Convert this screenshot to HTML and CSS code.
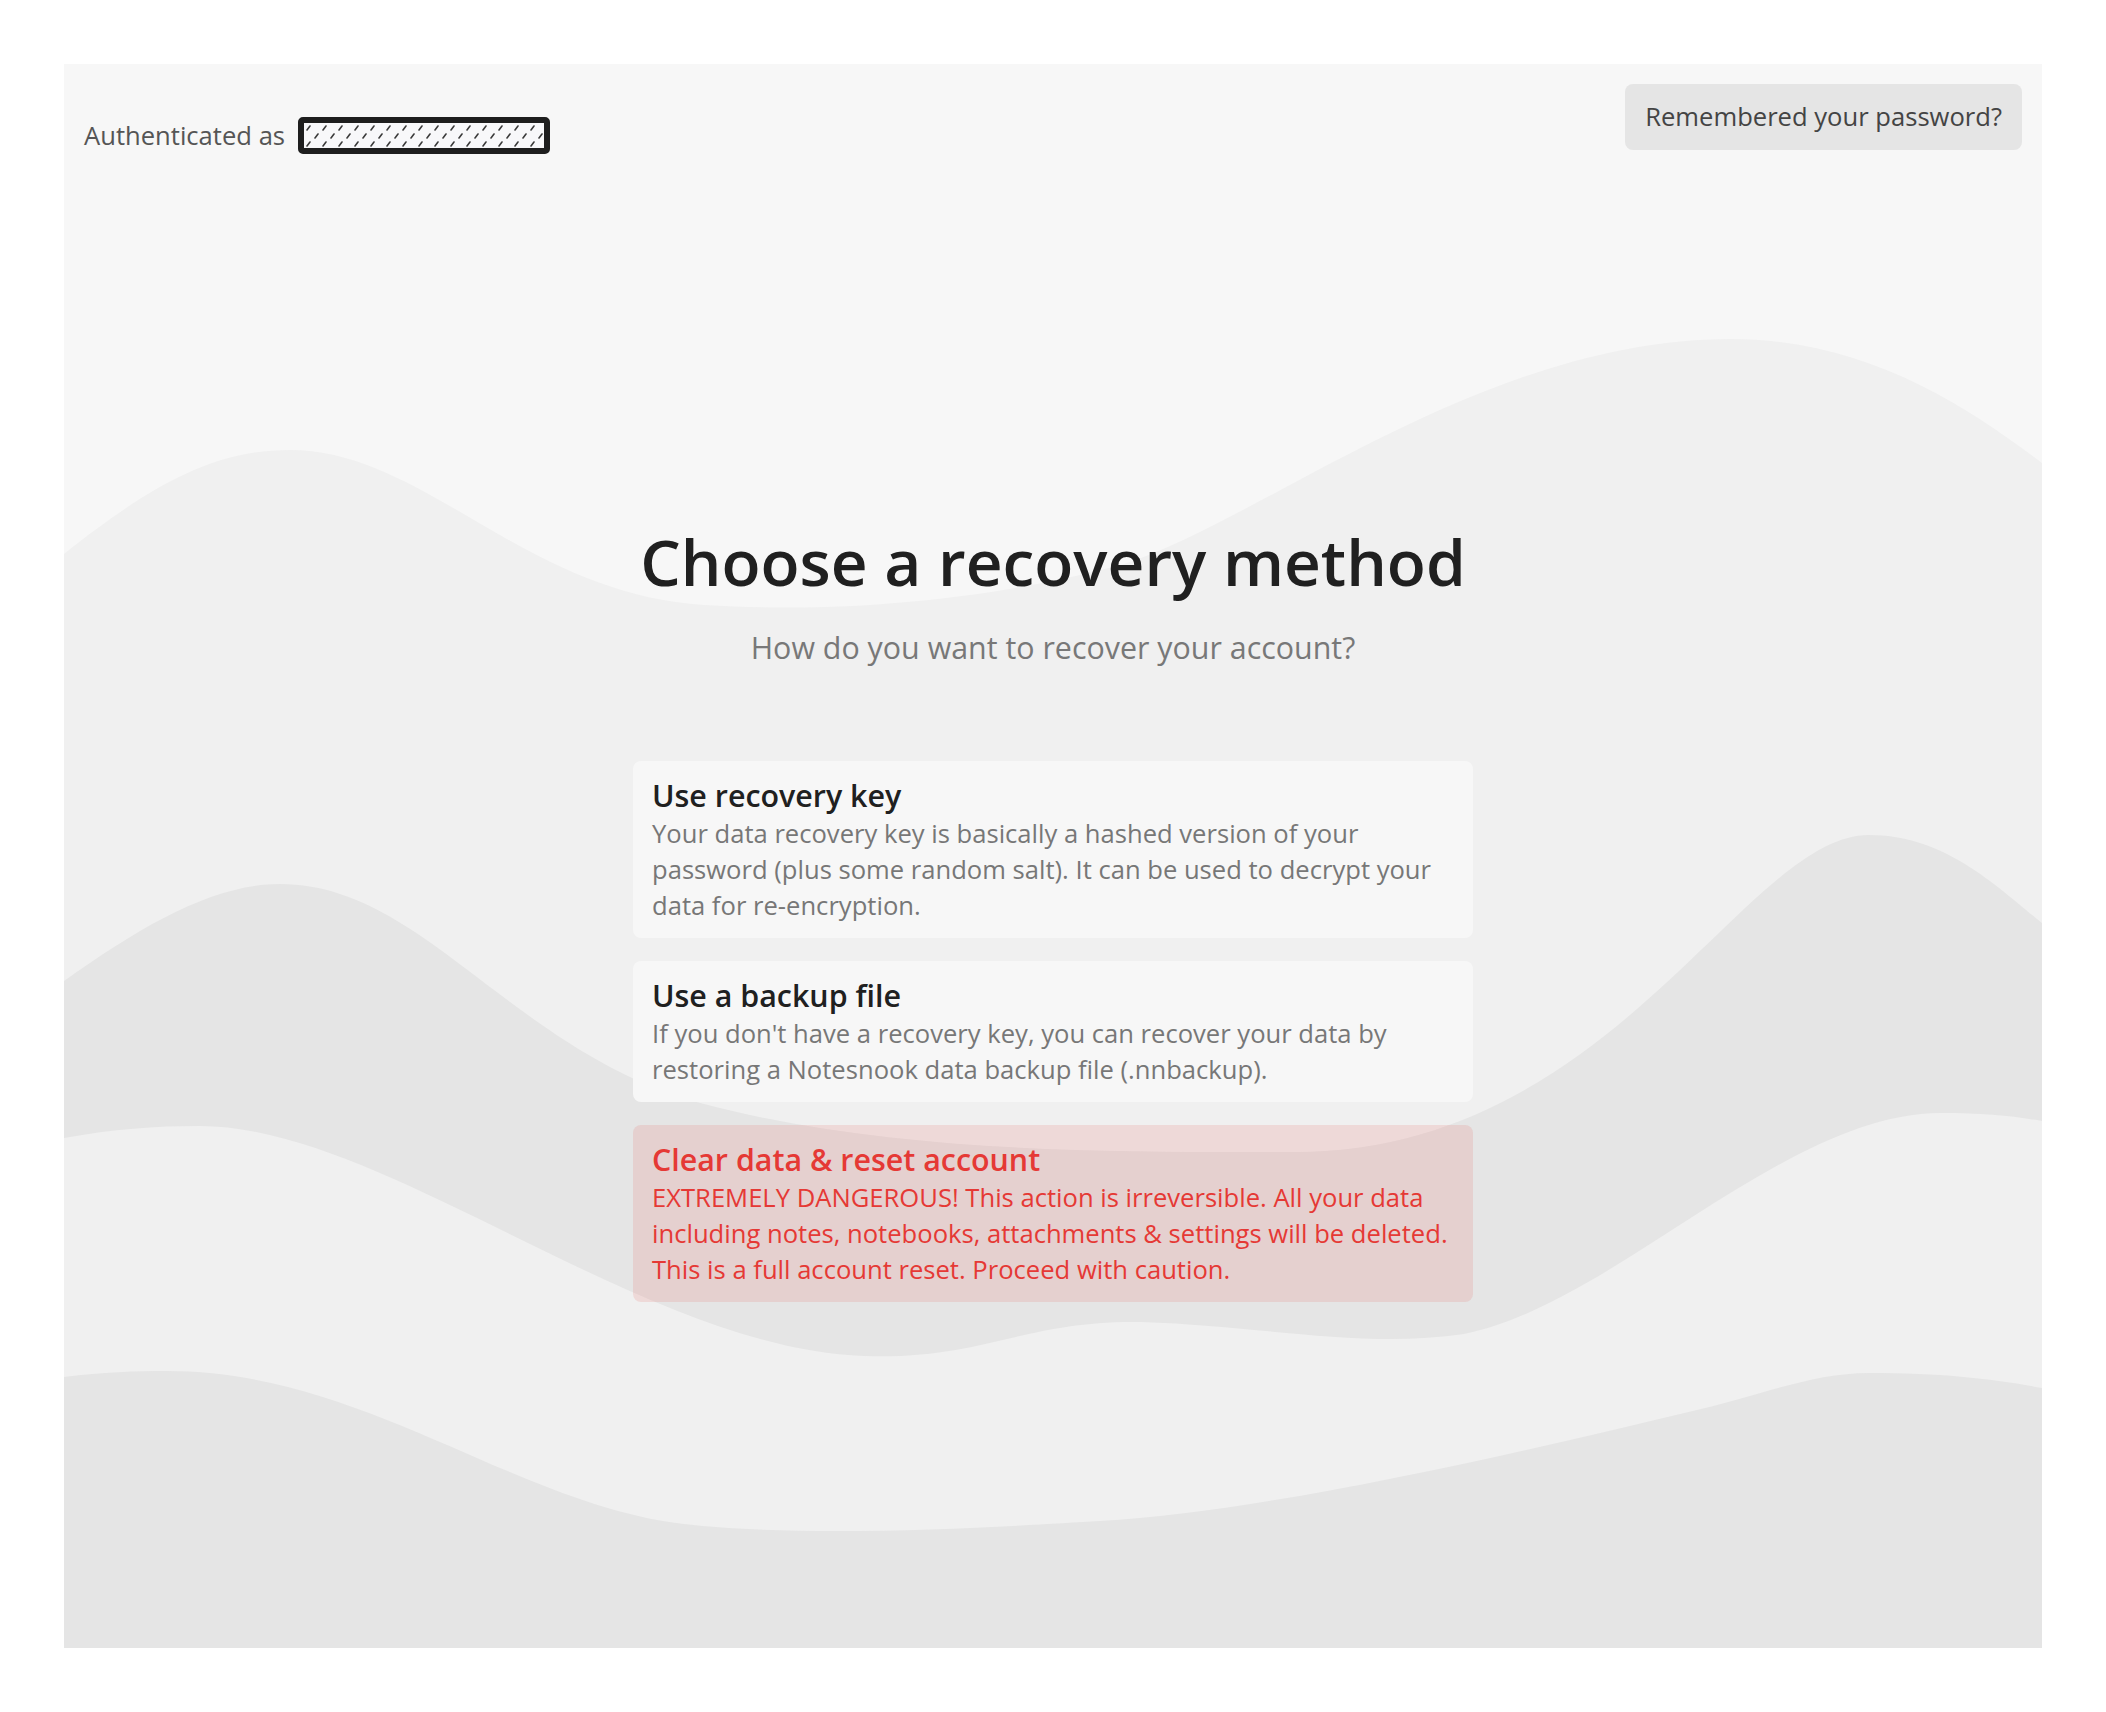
FILE: index.html
```html
<!DOCTYPE html>
<html lang="en">
<head>
<meta charset="utf-8">
<title>Choose a recovery method</title>
<link rel="stylesheet" href="styles.css">
</head>
<body>
<div class="frame">
  <svg class="waves" viewBox="0 0 1978 1584" preserveAspectRatio="none" aria-hidden="true">
    <path class="wave-light" d="M0,490 C100,410 160,386 226,386 C360,386 460,530 640,541 C800,551 950,530 1060,500 C1200,455 1420,275 1667,275 C1800,275 1900,340 1978,399 L1978,1584 L0,1584 Z"/>
    <path class="wave-dark" d="M0,917 C80,860 150,820 216,820 C360,820 450,990 640,1040 C830,1090 1050,1088 1230,1088 C1550,1088 1680,771 1805,771 C1880,771 1930,820 1978,859 L1978,1584 L0,1584 Z"/>
    <path class="wave-light" d="M0,1074 C50,1065 90,1062 136,1062 C320,1062 580,1285 800,1292 C920,1296 960,1256 1077,1258 C1200,1262 1300,1285 1400,1270 C1550,1240 1720,1049 1877,1049 C1920,1049 1950,1052 1978,1057 L1978,1584 L0,1584 Z"/>
    <path class="wave-dark" d="M0,1313 C40,1308 70,1307 103,1307 C300,1307 450,1440 620,1460 C750,1475 950,1462 1036,1457 C1200,1448 1450,1390 1637,1345 C1700,1330 1750,1309 1805,1309 C1880,1309 1930,1315 1978,1324 L1978,1584 L0,1584 Z"/>
  </svg>

  <header class="topbar">
    <div class="auth">
      <span class="auth-label">Authenticated as</span>
      <span class="redact">
        <svg class="redact-fill" width="100%" height="100%" aria-hidden="true">
          <defs>
            <pattern id="hatch" width="16" height="16" patternUnits="userSpaceOnUse">
              <line x1="3" y1="7" x2="6" y2="3"/>
              <line x1="11" y1="15" x2="14" y2="11"/>
            </pattern>
          </defs>
          <rect width="100%" height="100%" fill="url(#hatch)"/>
        </svg>
      </span>
    </div>
    <button class="btn-remember" type="button">Remembered your password?</button>
  </header>

  <main class="main">
    <h1 class="title">Choose a recovery method</h1>
    <p class="subtitle">How do you want to recover your account?</p>

    <div class="options">
      <div class="option">
        <div class="option-title">Use recovery key</div>
        <div class="option-desc">Your data recovery key is basically a hashed version of your password (plus some random salt). It can be used to decrypt your data for re-encryption.</div>
      </div>
      <div class="option">
        <div class="option-title">Use a backup file</div>
        <div class="option-desc">If you don't have a recovery key, you can recover your data by restoring a Notesnook data backup file (.nnbackup).</div>
      </div>
      <div class="option option-danger">
        <div class="option-title">Clear data &amp; reset account</div>
        <div class="option-desc">EXTREMELY DANGEROUS! This action is irreversible. All your data including notes, notebooks, attachments &amp; settings will be deleted. This is a full account reset. Proceed with caution.</div>
      </div>
    </div>
  </main>
</div>
</body>
</html>
```

FILE: styles.css
```css
* {
  box-sizing: border-box;
}

html, body {
  margin: 0;
  padding: 0;
  background: #ffffff;
}

body {
  font-family: "Open Sans", "Noto Sans", "Liberation Sans", sans-serif;
  color: #202020;
}

.frame {
  position: relative;
  margin: 64px;
  height: 1584px;
  background: #f7f7f7;
  overflow: hidden;
  display: flex;
  flex-direction: column;
}

.waves {
  position: absolute;
  top: 0;
  left: 0;
  width: 100%;
  height: 100%;
  z-index: 0;
}

.wave-light {
  fill: #f0f0f0;
}

.wave-dark {
  fill: #e5e5e5;
}

.topbar {
  position: relative;
  z-index: 1;
  display: flex;
  justify-content: space-between;
  align-items: flex-start;
  padding: 20px;
}

.auth {
  display: flex;
  align-items: center;
  margin-top: 33px;
  font-size: 25.6px;
  line-height: 36px;
  color: #555555;
}

.redact {
  display: block;
  width: 252px;
  height: 37px;
  margin-left: 13px;
  border: 6px solid #1e1e1e;
  border-radius: 5px;
  background: #f8f8fa;
  overflow: hidden;
}

.redact-fill {
  display: block;
}

.redact-fill line {
  stroke: #3a3a3a;
  stroke-width: 1.6;
  stroke-linecap: round;
}

.btn-remember {
  height: 66px;
  padding: 0 20px;
  border: none;
  border-radius: 8px;
  background: #e5e5e5;
  color: #444444;
  font-family: "Open Sans", "Noto Sans", "Liberation Sans", sans-serif;
  font-size: 25.6px;
  line-height: 66px;
  cursor: pointer;
}

.main {
  position: relative;
  z-index: 1;
  flex: 1;
  display: flex;
  flex-direction: column;
  align-items: center;
  justify-content: center;
  padding-top: 2px;
}

.title {
  margin: 0;
  font-size: 64px;
  line-height: 77px;
  font-weight: 600;
  color: #202020;
}

.subtitle {
  margin: 27px 0 0;
  font-size: 30.4px;
  line-height: 42px;
  color: #787878;
}

.options {
  margin-top: 92px;
  width: 840px;
  display: flex;
  flex-direction: column;
  gap: 23px;
}

.option {
  padding: 15px 19px 14px;
  border-radius: 8px;
  background: #f7f7f7;
  cursor: pointer;
}

.option-title {
  font-size: 30.4px;
  line-height: 40px;
  font-weight: 600;
  color: #202020;
}

.option-desc {
  font-size: 25.6px;
  line-height: 36px;
  color: #777777;
}

.option-danger {
  background: rgba(229, 57, 53, 0.12);
}

.option-danger .option-title,
.option-danger .option-desc {
  color: #e53935;
}
```
